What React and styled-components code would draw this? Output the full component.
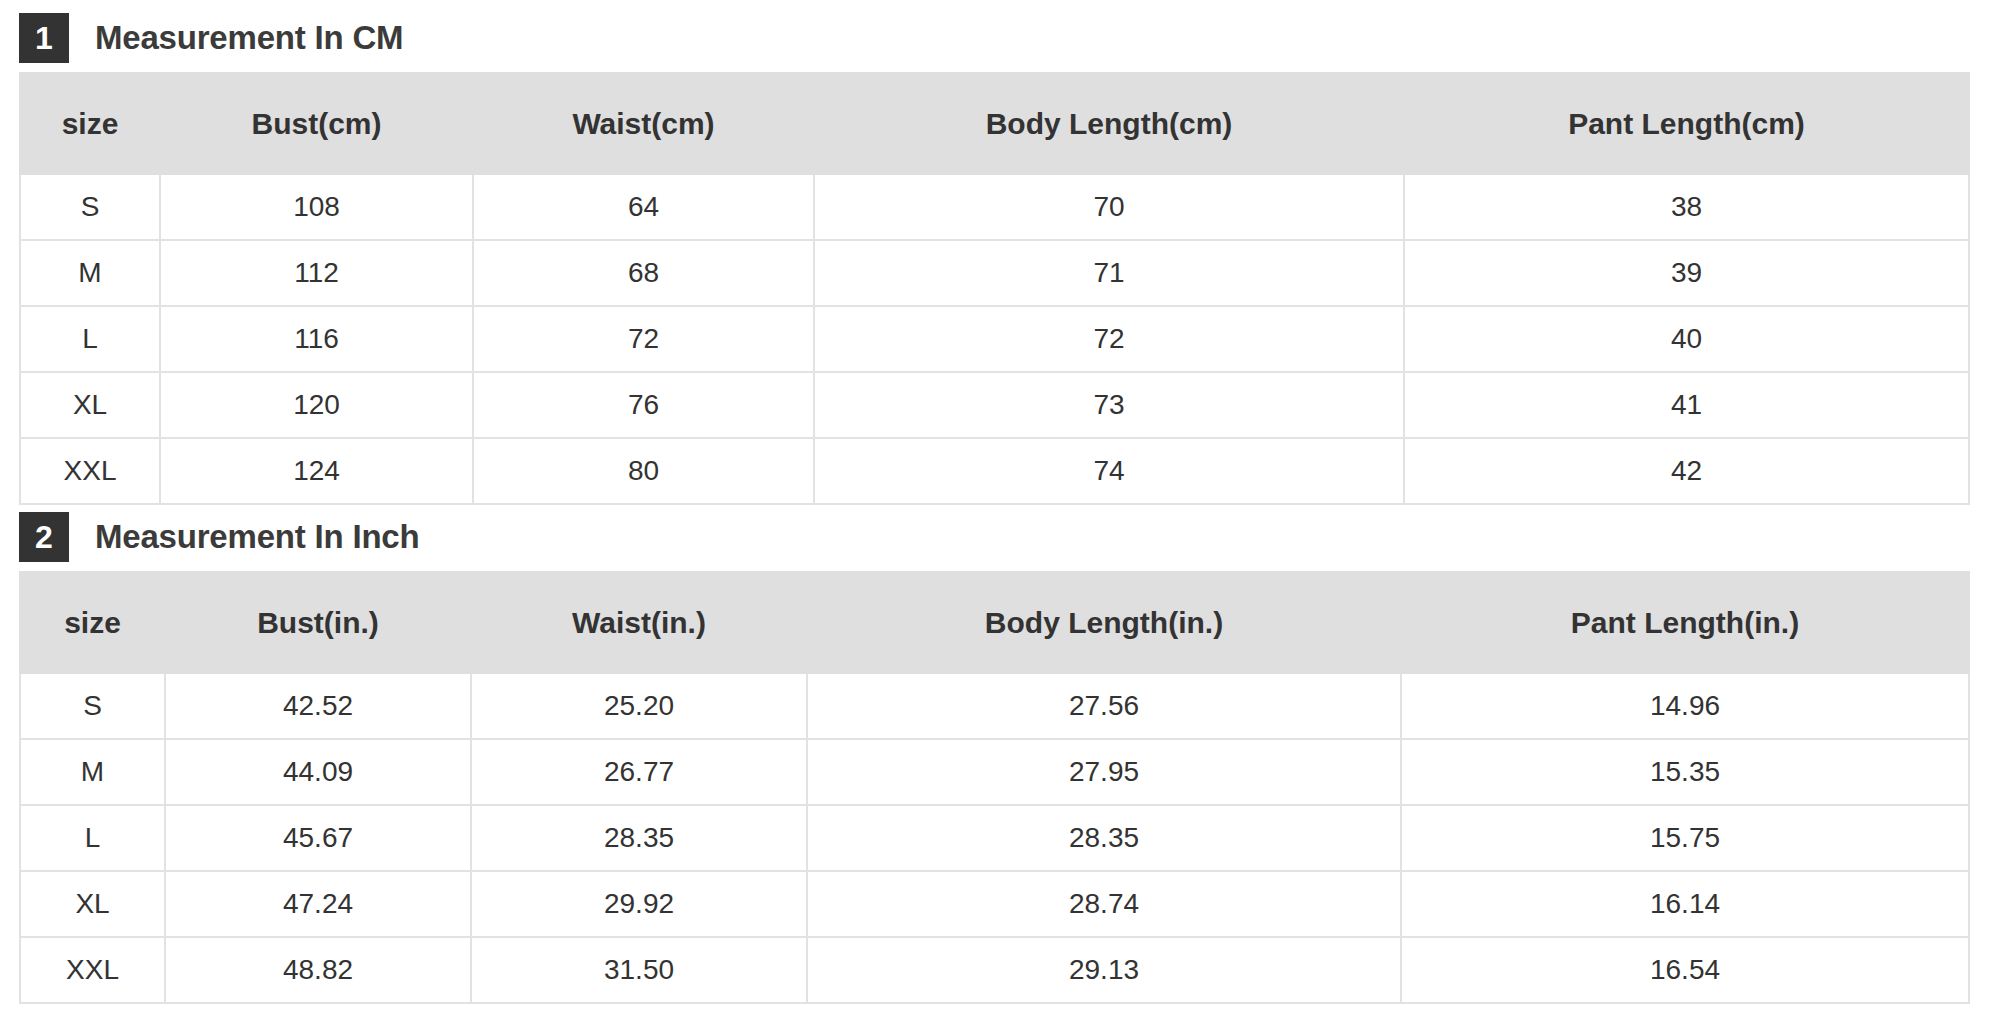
import React from "react";
import styled, { createGlobalStyle } from "styled-components";

const GlobalStyle = createGlobalStyle`
  html, body {
    margin: 0;
    padding: 0;
    background: #fff;
    font-family: "Liberation Sans", Arial, sans-serif;
  }
`;

const cmData = {
  number: 1,
  title: "Measurement In CM",
  widths: [140, 313, 341, 590, 565],
  head: ["size", "Bust(cm)", "Waist(cm)", "Body Length(cm)", "Pant Length(cm)"],
  rows: [
    ["S", "108", "64", "70", "38"],
    ["M", "112", "68", "71", "39"],
    ["L", "116", "72", "72", "40"],
    ["XL", "120", "76", "73", "41"],
    ["XXL", "124", "80", "74", "42"],
  ],
};

const inchData = {
  number: 2,
  title: "Measurement In Inch",
  widths: [145, 306, 336, 594, 568],
  head: ["size", "Bust(in.)", "Waist(in.)", "Body Length(in.)", "Pant Length(in.)"],
  rows: [
    ["S", "42.52", "25.20", "27.56", "14.96"],
    ["M", "44.09", "26.77", "27.95", "15.35"],
    ["L", "45.67", "28.35", "28.35", "15.75"],
    ["XL", "47.24", "29.92", "28.74", "16.14"],
    ["XXL", "48.82", "31.50", "29.13", "16.54"],
  ],
};

const Page = styled.div`
  padding: 13px 0 0 19px;
  width: 1949px;
  display: flex;
  flex-direction: column;
`;

const Section = styled.section`
  display: flex;
  flex-direction: column;
  gap: 9px;
  & + & {
    margin-top: 7px;
  }
`;

const TitleBar = styled.div`
  display: flex;
  align-items: center;
  gap: 26px;
  height: 50px;
`;

const Badge = styled.span`
  width: 50px;
  height: 50px;
  background: #333333;
  color: #ffffff;
  font-size: 32px;
  font-weight: bold;
  display: flex;
  align-items: center;
  justify-content: center;
`;

const Title = styled.h2`
  margin: 0;
  font-size: 33px;
  font-weight: bold;
  color: #3b3b3b;
  letter-spacing: -0.2px;
`;

const Table = styled.table`
  width: 100%;
  table-layout: fixed;
  border-collapse: collapse;
  border: 2px solid #e2e2e2;
  color: #333333;
`;

const HeadCell = styled.th`
  height: 99px;
  padding: 0;
  background: #dfdfdf;
  border: 2px solid #dfdfdf;
  font-size: 30px;
  font-weight: bold;
  text-align: center;
  vertical-align: middle;
`;

const Cell = styled.td`
  height: 64px;
  padding: 0;
  border: 2px solid #e2e2e2;
  font-size: 28px;
  text-align: center;
  vertical-align: middle;
`;

const SizeTable = ({ data }) => (
  <Section>
    <TitleBar>
      <Badge>{data.number}</Badge>
      <Title>{data.title}</Title>
    </TitleBar>
    <Table>
      <colgroup>
        {data.widths.map((w, i) => (
          <col key={i} style={{ width: w }} />
        ))}
      </colgroup>
      <thead>
        <tr>
          {data.head.map((h) => (
            <HeadCell key={h}>{h}</HeadCell>
          ))}
        </tr>
      </thead>
      <tbody>
        {data.rows.map((row) => (
          <tr key={row[0]}>
            {row.map((v, i) => (
              <Cell key={i}>{v}</Cell>
            ))}
          </tr>
        ))}
      </tbody>
    </Table>
  </Section>
);

export default function App() {
  return (
    <>
      <GlobalStyle />
      <Page>
        <SizeTable data={cmData} />
        <SizeTable data={inchData} />
      </Page>
    </>
  );
}
